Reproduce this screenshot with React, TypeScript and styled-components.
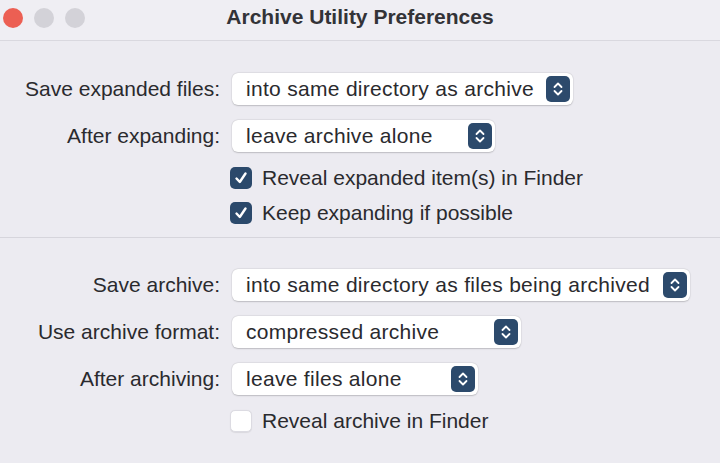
import React from 'react';
import styled, {createGlobalStyle} from 'styled-components';

const GlobalStyle = createGlobalStyle`
  html, body {
    margin: 0;
    padding: 0;
    background: #ecebf1;
  }
  body {
    font-family: "Liberation Sans", Arial, sans-serif;
    color: #2a2a2e;
  }
`;

const Window = styled.div`
  width: 720px;
  height: 463px;
  background: #ecebf1;
  display: flex;
  flex-direction: column;
  overflow: hidden;
`;

const TitleBar = styled.div`
  height: 40px;
  flex: none;
  display: flex;
  align-items: center;
  position: relative;
  background: #efeef3;
  border-bottom: 1px solid #d9d8df;
`;

const Lights = styled.div`
  display: flex;
  gap: 11px;
  padding-left: 3px;
  margin-top: -5px;
`;

const Light = styled.span<{$color: string}>`
  width: 20px;
  height: 20px;
  border-radius: 50%;
  background: ${p => p.$color};
`;

const Title = styled.div`
  position: absolute;
  left: 0;
  right: 0;
  top: 5px;
  text-align: center;
  font-weight: bold;
  font-size: 21px;
  color: #333337;
`;

const Section = styled.div<{$top: number; $bottom: number}>`
  display: grid;
  grid-template-columns: 220px 1fr;
  column-gap: 12px;
  align-items: center;
  padding: ${p => p.$top}px 0 ${p => p.$bottom}px;
`;

const Divider = styled.div`
  height: 1px;
  background: #d6d5dc;
`;

const Label = styled.div<{$gap: number}>`
  text-align: right;
  font-size: 21px;
  height: 32px;
  line-height: 32px;
  white-space: nowrap;
  margin-bottom: ${p => p.$gap}px;
`;

const Popup = styled.div<{$width: number; $gap: number}>`
  width: ${p => p.$width}px;
  height: 32px;
  box-sizing: border-box;
  background: #fff;
  border-radius: 6px;
  box-shadow: 0 0.5px 1.5px rgba(0, 0, 0, 0.18), 0 0 0 0.5px rgba(0, 0, 0, 0.05);
  display: flex;
  align-items: center;
  justify-content: space-between;
  padding: 0 3px 0 14px;
  font-size: 21px;
  letter-spacing: 0.3px;
  white-space: nowrap;
  margin-bottom: ${p => p.$gap}px;
`;

const Stepper = styled.span`
  width: 24px;
  height: 26px;
  border-radius: 5px;
  background: #2c4a6c;
  display: flex;
  align-items: center;
  justify-content: center;
`;

const CheckRow = styled.label<{$gap: number}>`
  grid-column: 2;
  display: flex;
  align-items: center;
  gap: 10px;
  height: 26px;
  font-size: 21px;
  white-space: nowrap;
  margin-left: -2px;
  margin-bottom: ${p => p.$gap}px;
`;

const Box = styled.span<{$checked: boolean}>`
  width: 22px;
  height: 22px;
  box-sizing: border-box;
  border-radius: 5px;
  display: flex;
  align-items: center;
  justify-content: center;
  background: ${p => (p.$checked ? '#2b496b' : '#ffffff')};
  border: ${p => (p.$checked ? 'none' : '1px solid #dcdbe2')};
  box-shadow: ${p => (p.$checked ? 'none' : '0 0.5px 1px rgba(0,0,0,0.08)')};
`;

const Chevrons = () => (
  <svg width="12" height="18" viewBox="0 0 12 18">
    <path d="M2.5 7 L6 3.5 L9.5 7 M2.5 11 L6 14.5 L9.5 11" fill="none" stroke="#fff" strokeWidth="1.8" strokeLinecap="round" strokeLinejoin="round" />
  </svg>
);

const Tick = () => (
  <svg width="16" height="16" viewBox="0 0 16 16">
    <path d="M3.5 8.5 L6.8 12 L12.5 3.5" fill="none" stroke="#fff" strokeWidth="2.4" strokeLinecap="round" strokeLinejoin="round" />
  </svg>
);

type Select = {label: string; value: string; width: number};

const PopupRow = ({label, value, width, gap}: Select & {gap: number}) => (
  <>
    <Label $gap={gap}>{label}</Label>
    <div>
      <Popup $width={width} $gap={gap}>
        {value}
        <Stepper>
          <Chevrons />
        </Stepper>
      </Popup>
    </div>
  </>
);

const Check = ({text, checked, gap}: {text: string; checked: boolean; gap: number}) => (
  <CheckRow $gap={gap}>
    <Box $checked={checked}>{checked && <Tick />}</Box>
    {text}
  </CheckRow>
);

export default function App() {
  return (
    <>
      <GlobalStyle />
      <Window>
        <TitleBar>
          <Lights>
            <Light $color="#ec5f53" />
            <Light $color="#d3d2d8" />
            <Light $color="#d3d2d8" />
          </Lights>
          <Title>Archive Utility Preferences</Title>
        </TitleBar>
        <Section $top={32} $bottom={11}>
          <PopupRow label="Save expanded files:" value="into same directory as archive" width={341} gap={15} />
          <PopupRow label="After expanding:" value="leave archive alone" width={263} gap={13} />
          <Check text="Reveal expanded item(s) in Finder" checked gap={9} />
          <Check text="Keep expanding if possible" checked gap={0} />
        </Section>
        <Divider />
        <Section $top={31} $bottom={0}>
          <PopupRow label="Save archive:" value="into same directory as files being archived" width={458} gap={15} />
          <PopupRow label="Use archive format:" value="compressed archive" width={289} gap={15} />
          <PopupRow label="After archiving:" value="leave files alone" width={246} gap={13} />
          <Check text="Reveal archive in Finder" checked={false} gap={0} />
        </Section>
      </Window>
    </>
  );
}
